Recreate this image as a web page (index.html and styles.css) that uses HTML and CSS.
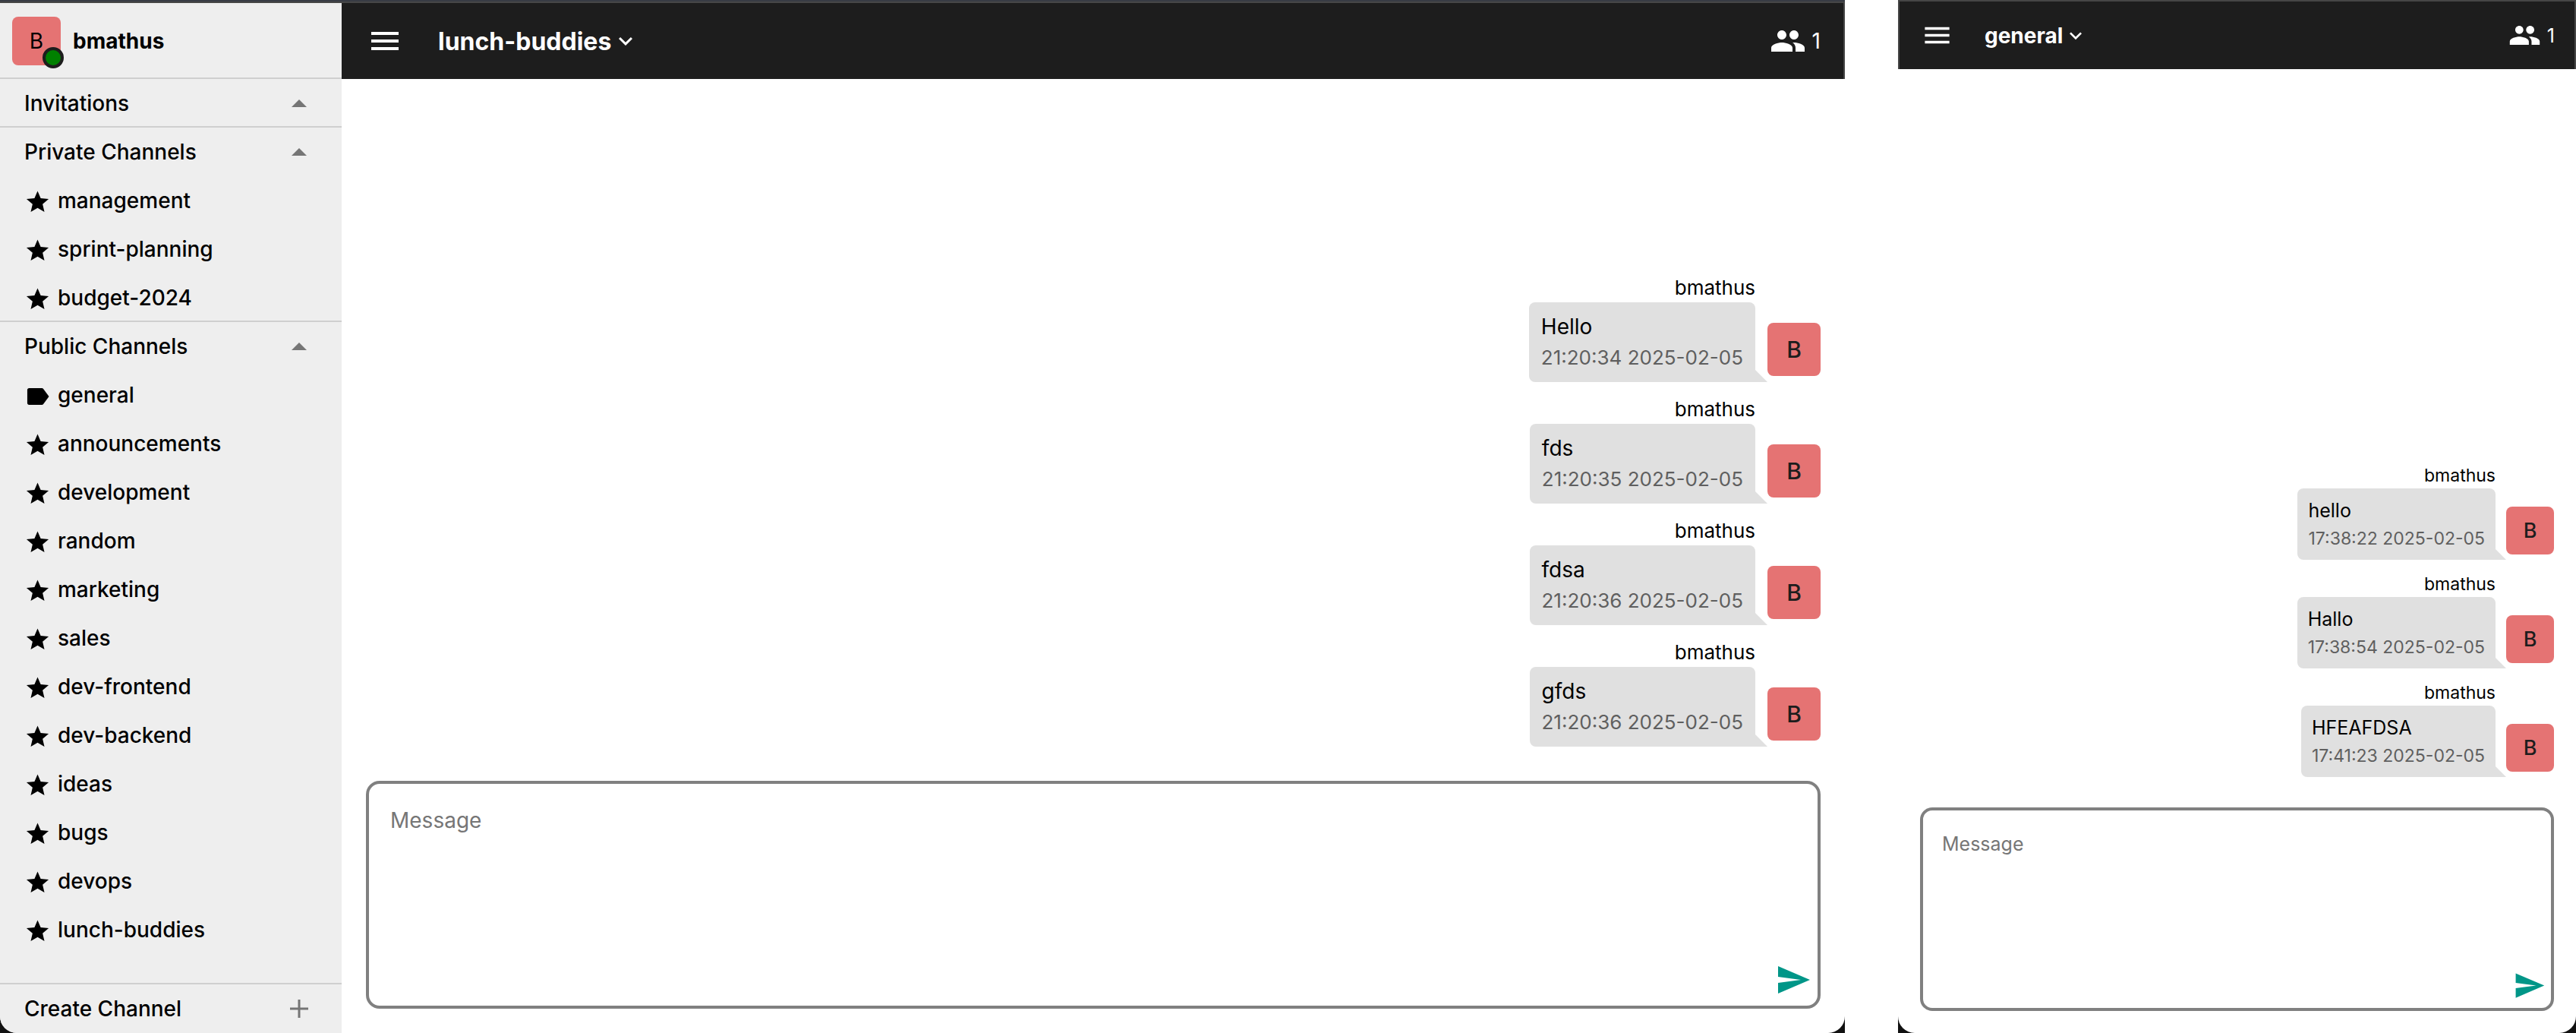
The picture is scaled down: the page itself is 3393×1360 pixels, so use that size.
FILE: index.html
```
<!DOCTYPE html>
<html lang="en">
<head>
<meta charset="utf-8">
<meta name="viewport" content="width=device-width, initial-scale=1">
<title>lunch-buddies</title>
<link rel="stylesheet" href="styles.css">
</head>
<body>
<svg class="sprite" aria-hidden="true">
  <symbol id="menu" viewBox="0 0 24 24"><path d="M3 18h18v-2H3v2zm0-5h18v-2H3v2zm0-7v2h18V6H3z"/></symbol>
  <symbol id="chevron" viewBox="0 0 24 24"><path d="M16.59 8.59L12 13.17 7.41 8.59 6 10l6 6 6-6z"/></symbol>
  <symbol id="people" viewBox="0 0 24 24"><path d="M16 11c1.66 0 2.99-1.34 2.99-3S17.66 5 16 5c-1.66 0-3 1.34-3 3s1.34 3 3 3zm-8 0c1.66 0 2.99-1.34 2.99-3S9.66 5 8 5C6.34 5 5 6.34 5 8s1.34 3 3 3zm0 2c-2.33 0-7 1.17-7 3.5V19h14v-2.5c0-2.33-4.67-3.5-7-3.5zm8 0c-.29 0-.62.02-.97.05 1.16.84 1.97 1.97 1.97 3.45V19h6v-2.5c0-2.33-4.67-3.5-7-3.5z"/></symbol>
  <symbol id="star" viewBox="0 -1 24 24"><path d="M12 17.27L18.18 21l-1.64-7.03L22 9.24l-7.19-.61L12 2 9.19 8.63 2 9.24l5.46 4.73L5.82 21z"/></symbol>
  <symbol id="label" viewBox="0 -1 24 24"><path d="M17.2 5.2C16.9 4.8 16.4 4.5 15.9 4.5H4.3C3.400 4.500 2.700 5.200 2.700 6.100V17.900C2.700 18.800 3.400 19.500 4.300 19.500H15.900C16.400 19.500 16.900 19.200 17.200 18.800L22.300 12z"/></symbol>
  <symbol id="caret" viewBox="0 0 24 24"><path d="M2 17L12 7l10 10z"/></symbol>
  <symbol id="plus" viewBox="0 0 24 24"><path d="M10.500 0h3v10.500H24v3H13.500V24h-3V13.500H0v-3h10.500z"/></symbol>
  <symbol id="send" viewBox="0 0 24 24"><path d="M2.010 21L23 12 2.010 3 2 10l15 2-15 2z"/></symbol>
</svg>
<div class="desk">
  <div class="window window--wide">
    <div class="window-body">
      <aside class="sidebar">
        <div class="user">
          <span class="avatar avatar--user">B<span class="status"></span></span>
          <strong>bmathus</strong>
        </div>
        <section class="group">
          <button class="row group-head" type="button">Invitations<svg><use href="#caret"/></svg></button>
        </section>
        <section class="group">
          <button class="row group-head" type="button">Private Channels<svg><use href="#caret"/></svg></button>
          <nav aria-label="Private channels">
            <a class="row channel" href="#"><svg><use href="#star"/></svg>management</a>
            <a class="row channel" href="#"><svg><use href="#star"/></svg>sprint-planning</a>
            <a class="row channel" href="#"><svg><use href="#star"/></svg>budget-2024</a>
          </nav>
        </section>
        <section class="group group--last">
          <button class="row group-head" type="button">Public Channels<svg><use href="#caret"/></svg></button>
          <nav aria-label="Public channels">
            <a class="row channel" href="#"><svg><use href="#label"/></svg>general</a>
            <a class="row channel" href="#"><svg><use href="#star"/></svg>announcements</a>
            <a class="row channel" href="#"><svg><use href="#star"/></svg>development</a>
            <a class="row channel" href="#"><svg><use href="#star"/></svg>random</a>
            <a class="row channel" href="#"><svg><use href="#star"/></svg>marketing</a>
            <a class="row channel" href="#"><svg><use href="#star"/></svg>sales</a>
            <a class="row channel" href="#"><svg><use href="#star"/></svg>dev-frontend</a>
            <a class="row channel" href="#"><svg><use href="#star"/></svg>dev-backend</a>
            <a class="row channel" href="#"><svg><use href="#star"/></svg>ideas</a>
            <a class="row channel" href="#"><svg><use href="#star"/></svg>bugs</a>
            <a class="row channel" href="#"><svg><use href="#star"/></svg>devops</a>
            <a class="row channel" href="#"><svg><use href="#star"/></svg>lunch-buddies</a>
          </nav>
        </section>
        <button class="row create" type="button">Create Channel<svg><use href="#plus"/></svg></button>
      </aside>
      <main class="chat">
        <header class="bar">
          <button class="icon-button" type="button" aria-label="Menu"><svg class="icon"><use href="#menu"/></svg></button>
          <button class="title" type="button">lunch-buddies<svg><use href="#chevron"/></svg></button>
          <button class="members" type="button"><svg class="icon"><use href="#people"/></svg>1</button>
        </header>
        <div class="messages">
          <article class="message">
            <div class="content"><div class="name">bmathus</div><div class="bubble"><p>Hello</p><time>21:20:34 2025-02-05</time></div></div>
            <span class="avatar">B</span>
          </article>
          <article class="message">
            <div class="content"><div class="name">bmathus</div><div class="bubble"><p>fds</p><time>21:20:35 2025-02-05</time></div></div>
            <span class="avatar">B</span>
          </article>
          <article class="message">
            <div class="content"><div class="name">bmathus</div><div class="bubble"><p>fdsa</p><time>21:20:36 2025-02-05</time></div></div>
            <span class="avatar">B</span>
          </article>
          <article class="message">
            <div class="content"><div class="name">bmathus</div><div class="bubble"><p>gfds</p><time>21:20:36 2025-02-05</time></div></div>
            <span class="avatar">B</span>
          </article>
        </div>
        <form class="composer">
          <textarea placeholder="Message" aria-label="Message"></textarea>
          <button class="icon-button send" type="button" aria-label="Send"><svg class="icon"><use href="#send"/></svg></button>
        </form>
      </main>
    </div>
  </div>
  <div class="window window--narrow">
    <div class="window-body">
      <section class="chat">
        <header class="bar">
          <button class="icon-button" type="button" aria-label="Menu"><svg class="icon"><use href="#menu"/></svg></button>
          <button class="title" type="button">general<svg><use href="#chevron"/></svg></button>
          <button class="members" type="button"><svg class="icon"><use href="#people"/></svg>1</button>
        </header>
        <div class="messages">
          <article class="message">
            <div class="content"><div class="name">bmathus</div><div class="bubble"><p>hello</p><time>17:38:22 2025-02-05</time></div></div>
            <span class="avatar">B</span>
          </article>
          <article class="message">
            <div class="content"><div class="name">bmathus</div><div class="bubble"><p>Hallo</p><time>17:38:54 2025-02-05</time></div></div>
            <span class="avatar">B</span>
          </article>
          <article class="message">
            <div class="content"><div class="name">bmathus</div><div class="bubble"><p>HFEAFDSA</p><time>17:41:23 2025-02-05</time></div></div>
            <span class="avatar">B</span>
          </article>
        </div>
        <form class="composer">
          <textarea placeholder="Message" aria-label="Message"></textarea>
          <button class="icon-button send" type="button" aria-label="Send"><svg class="icon"><use href="#send"/></svg></button>
        </form>
      </section>
    </div>
  </div>
</div>
</body>
</html>
```
FILE: styles.css
```
* { box-sizing: border-box; }

body {
  margin: 0;
  background: #fff;
  color: #000;
  font-family: Inter, "Liberation Sans", sans-serif;
}

button, textarea {
  margin: 0;
  padding: 0;
  border: 0;
  background: none;
  color: inherit;
  font: inherit;
}

p { margin: 0; }
a { color: inherit; text-decoration: none; }
svg { display: block; flex: none; fill: currentColor; }
.sprite { position: absolute; width: 0; height: 0; }

/* Two windows side by side */
.desk {
  display: grid;
  grid-template-columns: minmax(0, 2430fr) minmax(0, 893fr);
  gap: 70px;
  min-height: 100vh;
}

.window {
  display: flex;
  background: #111;
}

.window-body {
  display: flex;
  flex: 1;
  min-width: 0;
  overflow: hidden;
  background: #fff;
  border-top: 2px solid #464646;
  border-radius: 0 0 22px 22px;
}

.window--wide {
  --text: 28px;
  --small: 26px;
  --title: 32px;
  --initial: 30px;
  --icon: 48px;
  --chevron: 36px;
  --bar: 100px;
  --bar-left: 33px;
  --bar-right: 30px;
  --edge: 32px;
  --title-gap: 46px;
  --line: 32px;
  --stamp-line: 33px;
  --stamp-gap: 8px;
  --name-line: 38px;
  --pad: 16px;
  --message-gap: 17px;
  --avatar: 70px;
  --avatar-drop: 8px;
  --composer: 300px;
  --composer-gap: 45px;
  --composer-radius: 18px;
  --field-top: 32px;
  --field-pad: 28px;
  --send-right: 8px;
  --send-bottom: 10px;
  border-top: 2px solid #383c44;
}

.window--narrow {
  --text: 25px;
  --small: 23px;
  --title: 28px;
  --initial: 27px;
  --icon: 43px;
  --chevron: 32px;
  --bar: 89px;
  --bar-left: 28px;
  --bar-right: 26px;
  --edge: 29px;
  --title-gap: 41px;
  --line: 30px;
  --stamp-line: 28px;
  --stamp-gap: 8px;
  --name-line: 34px;
  --pad: 14px;
  --message-gap: 15px;
  --avatar: 63px;
  --avatar-drop: 7px;
  --composer: 268px;
  --composer-gap: 40px;
  --composer-radius: 16px;
  --field-top: 29px;
  --field-pad: 25px;
  --send-right: 7px;
  --send-bottom: 8px;
}

/* Sidebar */
.sidebar {
  display: flex;
  flex-direction: column;
  flex: none;
  width: 450px;
  background: #eee;
  font-size: 28px;
  font-weight: 500;
}

/* Dividers are drawn inside the rows so every row keeps the same height */
.user, .group { box-shadow: inset 0 -2px #cfcfcf; }

.user {
  display: flex;
  align-items: center;
  gap: 16px;
  height: 100px;
  padding: 0 16px;
}

.user strong { font-weight: 700; }

.group--last { flex: 1; }

.row {
  display: flex;
  align-items: center;
  width: 100%;
  height: 64px;
  padding: 0 32px;
  text-align: left;
}

.group-head, .create { justify-content: space-between; padding-right: 44px; }
.group-head svg, .create svg { width: 24px; height: 24px; color: #757575; }
.channel { gap: 9px; }
.channel svg { width: 35px; height: 35px; }

/* Avatars */
.avatar {
  display: flex;
  align-items: center;
  justify-content: center;
  flex: none;
  width: var(--avatar);
  height: var(--avatar);
  border-radius: 8px;
  background: #e57373;
  color: #1d1d1d;
  font-size: var(--initial);
  font-weight: 500;
}

.avatar--user {
  position: relative;
  width: 64px;
  height: 64px;
  color: #000;
  font-size: 28px;
  font-weight: 400;
}

.status {
  position: absolute;
  right: -4px;
  bottom: -4px;
  width: 28px;
  height: 28px;
  border: 4px solid #1d1d1d;
  border-radius: 50%;
  background: #008000;
}

/* Chat pane */
.chat {
  display: flex;
  flex-direction: column;
  flex: 1;
  min-width: 0;
  font-size: var(--text);
}

.bar {
  display: flex;
  align-items: center;
  height: var(--bar);
  padding: 0 var(--bar-right) 0 var(--bar-left);
  border-right: 2px solid #464646;
  background: #1d1d1d;
  color: #fff;
}

.window--narrow .bar { border-left: 2px solid #464646; }

.icon { width: var(--icon); height: var(--icon); }

.title {
  display: flex;
  align-items: center;
  gap: 1px;
  margin-left: var(--title-gap);
  font-size: var(--title);
  font-weight: 700;
}

.title svg { width: var(--chevron); height: var(--chevron); }

.members {
  display: flex;
  align-items: center;
  gap: 8px;
  margin-left: auto;
}

.messages {
  display: flex;
  flex: 1;
  flex-direction: column;
  align-items: flex-end;
  justify-content: flex-end;
  gap: var(--message-gap);
  padding: 0 var(--edge) var(--composer-gap);
}

.message {
  display: flex;
  align-items: flex-end;
  gap: var(--pad);
}

.message .avatar { margin-bottom: var(--avatar-drop); }

.name {
  font-size: var(--small);
  line-height: var(--name-line);
  text-align: right;
}

.bubble {
  position: relative;
  padding: var(--pad);
  border-radius: 8px 8px 0 8px;
  background: #e0e0e0;
  line-height: var(--line);
}

.bubble::after {
  content: "";
  position: absolute;
  left: 100%;
  bottom: 0;
  width: var(--pad);
  height: var(--pad);
  background: inherit;
  clip-path: polygon(0 0, 100% 100%, 0 100%);
}

.bubble time {
  display: block;
  margin-top: var(--stamp-gap);
  color: #5f5f5f;
  font-size: var(--small);
  line-height: var(--stamp-line);
}

.composer {
  display: flex;
  height: var(--composer);
  margin: 0 var(--edge) var(--edge);
  padding-right: var(--send-right);
  border: 4px solid #808080;
  border-radius: var(--composer-radius);
}

.composer textarea {
  flex: 1;
  min-width: 0;
  padding: var(--field-top) var(--field-pad);
  line-height: var(--line);
  outline: 0;
  resize: none;
}

.composer textarea::placeholder { color: #767676; opacity: 1; }

.send {
  align-self: flex-end;
  margin-bottom: var(--send-bottom);
  color: #009688;
}
```
